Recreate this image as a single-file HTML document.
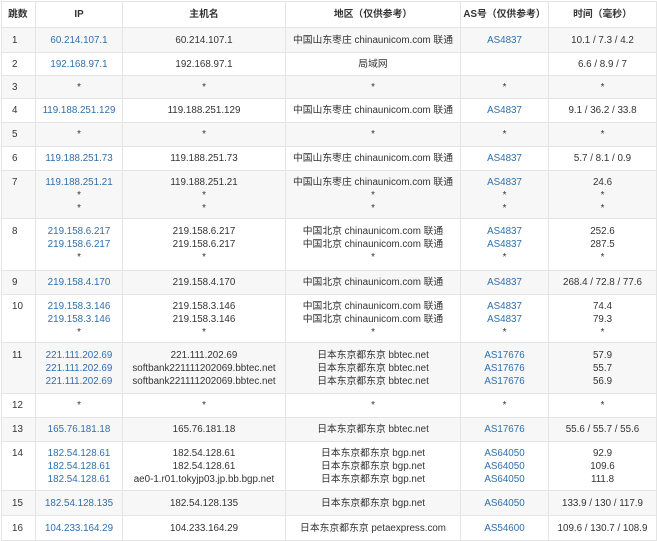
<!DOCTYPE html>
<html><head><meta charset="utf-8"><style>
body{margin:0;background:#fff;}
table{position:absolute;left:1px;top:1px;border-collapse:collapse;table-layout:fixed;width:655px;font-family:"Liberation Sans","Noto Sans CJK SC",sans-serif;font-size:9.8px;color:#333;}
td,th{border:1px solid #e4e4e4;text-align:center;padding:0 2px;line-height:13px;vertical-align:middle;white-space:nowrap;overflow:hidden;}
th{font-weight:bold;background:#fff;height:25px;}
td:first-child{text-align:left;padding-left:10px;}
tr.o td{background:#f7f7f7;}
tr.m td{vertical-align:top;padding-top:5px;}
a{color:#2f6fad;text-decoration:none;}
</style></head><body>
<table>
<colgroup><col style="width:34px"><col style="width:87px"><col style="width:163px"><col style="width:175px"><col style="width:88px"><col style="width:108px"></colgroup>
<tr><th style="text-align:left;padding-left:6px">跳数</th><th>IP</th><th>主机名</th><th>地区（仅供参考）</th><th>AS号（仅供参考）</th><th>时间（毫秒）</th></tr>
<tr class="o" style="height:25px"><td>1</td><td><a>60.214.107.1</a></td><td>60.214.107.1</td><td>中国山东枣庄 chinaunicom.com 联通</td><td><a>AS4837</a></td><td>10.1 / 7.3 / 4.2</td></tr>
<tr style="height:23px"><td>2</td><td><a>192.168.97.1</a></td><td>192.168.97.1</td><td>局域网</td><td></td><td>6.6 / 8.9 / 7</td></tr>
<tr class="o" style="height:23px"><td>3</td><td>*</td><td>*</td><td>*</td><td>*</td><td>*</td></tr>
<tr style="height:24px"><td>4</td><td><a>119.188.251.129</a></td><td>119.188.251.129</td><td>中国山东枣庄 chinaunicom.com 联通</td><td><a>AS4837</a></td><td>9.1 / 36.2 / 33.8</td></tr>
<tr class="o" style="height:24px"><td>5</td><td>*</td><td>*</td><td>*</td><td>*</td><td>*</td></tr>
<tr style="height:24px"><td>6</td><td><a>119.188.251.73</a></td><td>119.188.251.73</td><td>中国山东枣庄 chinaunicom.com 联通</td><td><a>AS4837</a></td><td>5.7 / 8.1 / 0.9</td></tr>
<tr class="o m" style="height:48px"><td>7</td><td><a>119.188.251.21</a><br>*<br>*</td><td>119.188.251.21<br>*<br>*</td><td>中国山东枣庄 chinaunicom.com 联通<br>*<br>*</td><td><a>AS4837</a><br>*<br>*</td><td>24.6<br>*<br>*</td></tr>
<tr class="m" style="height:52px"><td style="padding-top:6px">8</td><td style="padding-top:6px"><a>219.158.6.217</a><br><a>219.158.6.217</a><br>*</td><td style="padding-top:6px">219.158.6.217<br>219.158.6.217<br>*</td><td style="padding-top:6px">中国北京 chinaunicom.com 联通<br>中国北京 chinaunicom.com 联通<br>*</td><td style="padding-top:6px"><a>AS4837</a><br><a>AS4837</a><br>*</td><td style="padding-top:6px">252.6<br>287.5<br>*</td></tr>
<tr class="o" style="height:24px"><td>9</td><td><a>219.158.4.170</a></td><td>219.158.4.170</td><td>中国北京 chinaunicom.com 联通</td><td><a>AS4837</a></td><td>268.4 / 72.8 / 77.6</td></tr>
<tr class="m" style="height:48px"><td>10</td><td><a>219.158.3.146</a><br><a>219.158.3.146</a><br>*</td><td>219.158.3.146<br>219.158.3.146<br>*</td><td>中国北京 chinaunicom.com 联通<br>中国北京 chinaunicom.com 联通<br>*</td><td><a>AS4837</a><br><a>AS4837</a><br>*</td><td>74.4<br>79.3<br>*</td></tr>
<tr class="o m" style="height:51px"><td style="padding-top:6px">11</td><td style="padding-top:6px"><a>221.111.202.69</a><br><a>221.111.202.69</a><br><a>221.111.202.69</a></td><td style="padding-top:6px">221.111.202.69<br>softbank221111202069.bbtec.net<br>softbank221111202069.bbtec.net</td><td style="padding-top:6px">日本东京都东京 bbtec.net<br>日本东京都东京 bbtec.net<br>日本东京都东京 bbtec.net</td><td style="padding-top:6px"><a>AS17676</a><br><a>AS17676</a><br><a>AS17676</a></td><td style="padding-top:6px">57.9<br>55.7<br>56.9</td></tr>
<tr style="height:24px"><td>12</td><td>*</td><td>*</td><td>*</td><td>*</td><td>*</td></tr>
<tr class="o" style="height:24px"><td>13</td><td><a>165.76.181.18</a></td><td>165.76.181.18</td><td>日本东京都东京 bbtec.net</td><td><a>AS17676</a></td><td>55.6 / 55.7 / 55.6</td></tr>
<tr class="m" style="height:49px"><td>14</td><td><a>182.54.128.61</a><br><a>182.54.128.61</a><br><a>182.54.128.61</a></td><td>182.54.128.61<br>182.54.128.61<br>ae0-1.r01.tokyjp03.jp.bb.bgp.net</td><td>日本东京都东京 bgp.net<br>日本东京都东京 bgp.net<br>日本东京都东京 bgp.net</td><td><a>AS64050</a><br><a>AS64050</a><br><a>AS64050</a></td><td>92.9<br>109.6<br>111.8</td></tr>
<tr class="o" style="height:25px"><td>15</td><td><a>182.54.128.135</a></td><td>182.54.128.135</td><td>日本东京都东京 bgp.net</td><td><a>AS64050</a></td><td>133.9 / 130 / 117.9</td></tr>
<tr style="height:25px"><td>16</td><td><a>104.233.164.29</a></td><td>104.233.164.29</td><td>日本东京都东京 petaexpress.com</td><td><a>AS54600</a></td><td>109.6 / 130.7 / 108.9</td></tr>
</table>
</body></html>
